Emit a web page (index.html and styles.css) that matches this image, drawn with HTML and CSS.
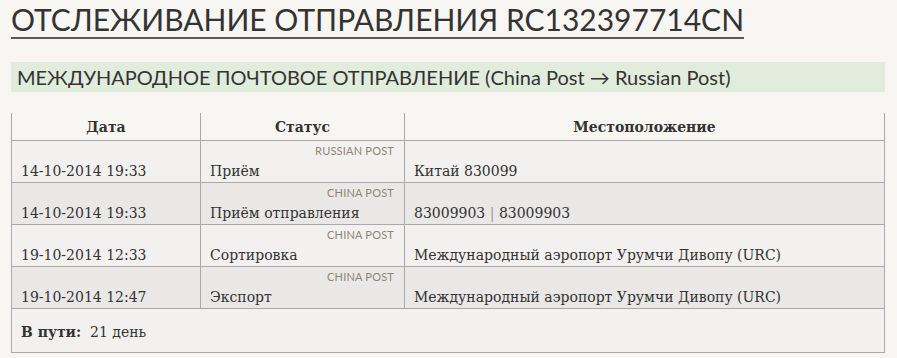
FILE: index.html
```html
<!DOCTYPE html>
<html lang="ru">
<head>
<meta charset="utf-8">
<title>Отслеживание отправления RC132397714CN</title>
<link rel="stylesheet" href="styles.css">
</head>
<body>
<div class="page">
  <h1 class="title">ОТСЛЕЖИВАНИЕ ОТПРАВЛЕНИЯ RC132397714CN</h1>
  <div class="band">МЕЖДУНАРОДНОЕ ПОЧТОВОЕ ОТПРАВЛЕНИЕ (China Post → Russian Post)</div>
  <table class="track">
    <thead>
      <tr><th class="c-date">Дата</th><th class="c-status">Статус</th><th class="c-loc">Местоположение</th></tr>
    </thead>
    <tbody>
      <tr class="odd">
        <td>14-10-2014 19:33</td>
        <td><span class="carrier">RUSSIAN POST</span>Приём</td>
        <td>Китай 830099</td>
      </tr>
      <tr class="even">
        <td>14-10-2014 19:33</td>
        <td><span class="carrier">CHINA POST</span>Приём отправления</td>
        <td>83009903 <span class="sep">|</span> 83009903</td>
      </tr>
      <tr class="odd">
        <td>19-10-2014 12:33</td>
        <td><span class="carrier">CHINA POST</span>Сортировка</td>
        <td>Международный аэропорт Урумчи Дивопу (URC)</td>
      </tr>
      <tr class="even">
        <td>19-10-2014 12:47</td>
        <td><span class="carrier">CHINA POST</span>Экспорт</td>
        <td>Международный аэропорт Урумчи Дивопу (URC)</td>
      </tr>
    </tbody>
    <tfoot>
      <tr><td colspan="3"><b>В пути:</b>&nbsp; 21 день</td></tr>
    </tfoot>
  </table>
</div>
</body>
</html>
```
FILE: styles.css
```css
html, body {
  margin: 0;
  padding: 0;
}
body {
  background: #f8f6f2;
  color: #2f2f2f;
  font-family: "DejaVu Serif", Georgia, serif;
}
.page {
  padding: 0 12px 0 11px;
}
.title {
  display: inline-block;
  margin: 0;
  padding: 4px 0 3px;
  font-family: "Lato", "Open Sans", sans-serif;
  font-weight: 400;
  font-size: 30px;
  line-height: 30px;
  color: #333;
  border-bottom: 2px solid #5a5a5a;
}
.band {
  margin-top: 23px;
  height: 30px;
  line-height: 31px;
  padding-left: 6px;
  background: #e1ecdc;
  font-family: "Lato", "Open Sans", sans-serif;
  font-size: 20px;
  color: #333;
}
.track {
  margin-top: 21px;
  width: 100%;
  border-collapse: collapse;
  font-size: 14px;
  color: #333;
}
.track th {
  height: 27px;
  padding: 0;
  font-weight: bold;
  text-align: center;
  border-left: 1px solid #a9a9a9;
  border-right: 1px solid #a9a9a9;
  border-bottom: 1px solid #a9a9a9;
}
.c-date { width: 188px; }
.c-status { width: 203px; }
.track td {
  height: 38px;
  padding: 0 10px 3px 9px;
  vertical-align: bottom;
  border: 1px solid #a9a9a9;
  position: relative;
}
.carrier {
  position: absolute;
  top: 3px;
  right: 10px;
  font-family: "Lato", "Open Sans", sans-serif;
  font-size: 11px;
  color: #8d8677;
  letter-spacing: 0.2px;
}
.odd td { background: #f2f1ef; }
.even td { background: #e9e8e6; }
.sep { color: #999; }
.track tfoot td {
  height: 41px;
  background: #f2f1ef;
  vertical-align: middle;
  padding: 2px 10px 0 9px;
}
```
